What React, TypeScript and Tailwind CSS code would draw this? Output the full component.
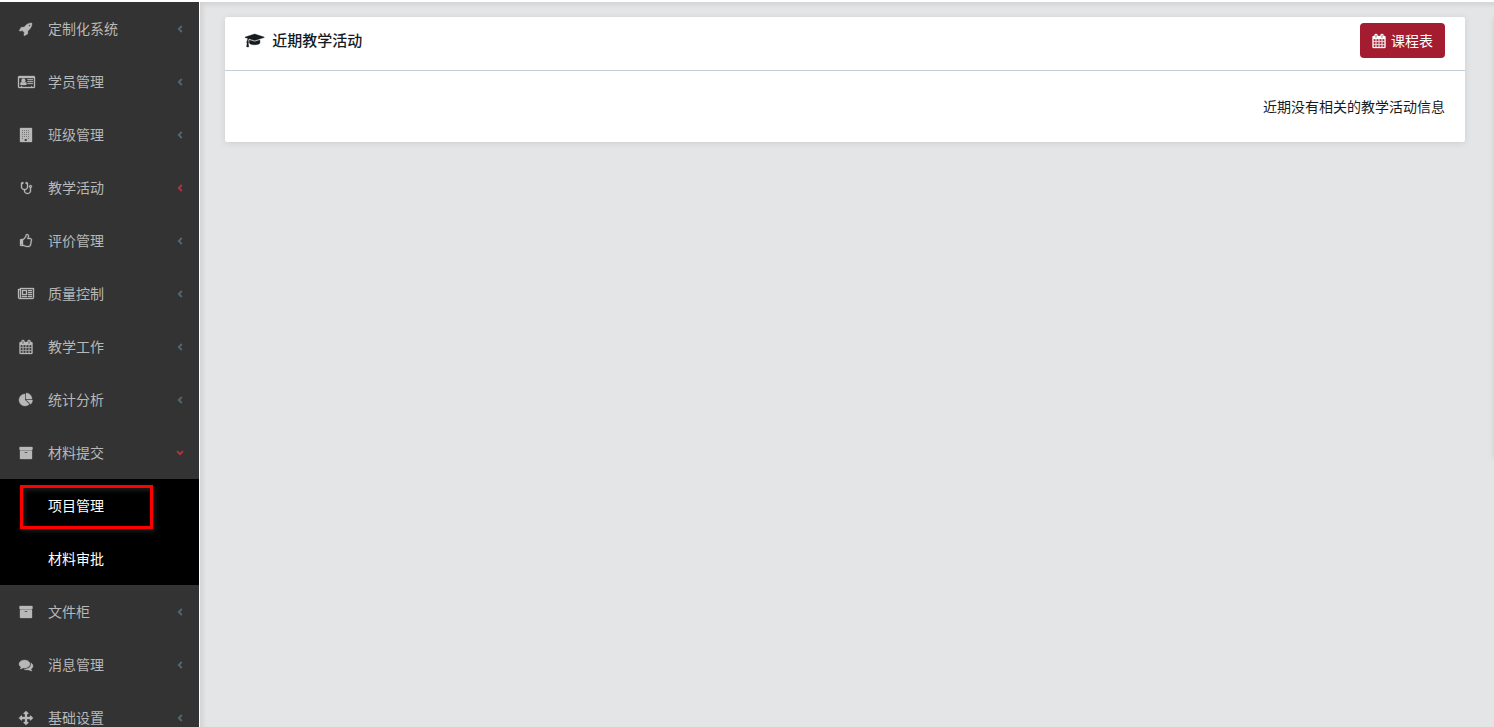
import { useState } from "react";

interface Glyph {
  width: number;
  d: string;
}

interface MenuItem {
  label: string;
  icon: Glyph;
  highlighted?: boolean;
  children?: string[];
}

// Glyphs share a 1792 unit em, only the width differs
const glyphs = {
  rocket: {
    width: 1792,
    d: "M1440 448q0-40-28-68t-68-28-68 28-28 68 28 68 68 28 68-28 28-68zm224-288q0 249-75.5 430.5t-253.5 360.5q-81 80-195 176l-20 379q-2 16-16 26l-384 224q-7 4-16 4-12 0-23-9l-64-64q-13-14-8-32l85-276-281-281-276 85q-3 1-9 1-14 0-23-9l-64-64q-17-19-5-39l224-384q10-14 26-16l379-20q96-114 176-195 188-187 358-258t431-71q14 0 24 9.5t10 22.5z",
  },
  idCard: {
    width: 2176,
    d: "M160 128H2016q66 0 113 47t47 113V1504q0 66-47 113t-113 47H160q-66 0-113-47t-47-113V288q0-66 47-113t113-47zM128 384V1504q0 32 32 32H384v-96H512v96H1664v-96H1792v96H2016q32 0 32-32V384zM352 1280q-64 0-64-120 0-270 180-270 90 70 222 70t222-70q180 0 180 270 0 120-64 120zM690 440a250 250 0 1 1 0 500a250 250 0 1 1 0-500zM1216 540H1900V640H1216zM1216 796H1900V896H1216zM1216 1052H1900V1152H1216z",
  },
  building: {
    width: 1536,
    d: "M64 0H1472q64 0 64 64V1728q0 64-64 64H64q-64 0-64-64V64q0-64 64-64zM256 256V384H384V256zM512 256V384H640V256zM768 256V384H896V256zM1024 256V384H1152V256zM256 512V640H384V512zM512 512V640H640V512zM768 512V640H896V512zM1024 512V640H1152V512zM256 768V896H384V768zM512 768V896H640V768zM768 768V896H896V768zM1024 768V896H1152V768zM256 1024V1152H384V1024zM512 1024V1152H640V1024zM768 1024V1152H896V1024zM1024 1024V1152H1152V1024zM256 1280V1408H384V1280zM1024 1280V1408H1152V1280zM576 1408V1664H896V1408z",
  },
  stethoscope: {
    width: 1408,
    d: "M1280 704q0-26-19-45t-45-19-45 19-19 45 19 45 45 19 45-19 19-45zm128 0q0 62-35.5 111t-92.5 70v395q0 159-131.5 271.5t-316.5 112.5-316.5-112.5-131.5-271.5v-132q-164-20-274-128t-110-252v-512q0-26 19-45t45-19q6 0 16 2 17-30 47-48t65-18q53 0 90.5 37.5t37.5 90.5-37.5 90.5-90.5 37.5q-33 0-64-18v402q0 106 94 181t226 75 226-75 94-181v-402q-31 18-64 18-53 0-90.5-37.5t-37.5-90.5 37.5-90.5 90.5-37.5q35 0 65 18t47 48q10-2 16-2 26 0 45 19t19 45v512q0 144-110 252t-274 128v132q0 106 94 181t226 75 226-75 94-181v-395q-57-21-92.5-70t-35.5-111q0-80 56-136t136-56 136 56 56 136z",
  },
  thumbsUp: {
    width: 1536,
    d: "M256 1344q0-26-19-45t-45-19-45 19-19 45 19 45 45 19 45-19 19-45zm1152-576q0-51-39-89.5t-89-38.5h-352q0-58 48-159.5t48-160.5q0-98-32-145t-128-47q-26 26-38 85t-30.5 125.5-59.5 109.5q-22 23-77 91-4 5-23 30t-31.5 41-34.5 42.5-40 44-38.5 35.5-40 27-35.5 9h-32v640h32q13 0 31.5 3t33 6.5 38 11 35 11.5 35.5 12.5 29 10.5q211 73 342 73h121q192 0 192-167 0-26-5-56 30-16 47.5-52.5t17.5-73.5-18-69q53-50 53-119 0-25-10-55.5t-25-47.5q32-1 53.5-47t21.5-81zm128-1q0 89-49 163 9 33 9 69 0 77-38 144 3 21 3 43 0 101-60 178 1 139-85 219.5t-227 80.5h-129q-96 0-189.5-22.5t-216.5-65.5q-116-40-138-40h-288q-53 0-90.5-37.5t-37.5-90.5v-640q0-53 37.5-90.5t90.5-37.5h274q36-24 137-155 58-75 107-128 24-25 35.5-85.5t30.5-126.5 62-108q39-37 90-37 84 0 151 32.5t102 101.5 35 186q0 93-48 192h176q104 0 180 76t76 179z",
  },
  newspaper: {
    width: 2048,
    d: "M1024 512h-384v384h384v-384zm128 640v128h-640v-128h640zm0-768v640h-640v-640h640zm640 768v128h-512v-128h512zm0-256v128h-512v-128h512zm0-256v128h-512v-128h512zm0-256v128h-512v-128h512zm-1536 960v-960h-128v960q0 26 19 45t45 19 45-19 19-45zm1664 0v-1088h-1536v1088q0 33-11 64h1483q26 0 45-19t19-45zm128-1216v1216q0 80-56 136t-136 56h-1664q-80 0-136-56t-56-136v-1088h256v-128h1792z",
  },
  calendar: {
    width: 1792,
    d: "M192 1664h288v-288h-288v288zm352 0h320v-288h-320v288zm-352-352h288v-320h-288v320zm352 0h320v-320h-320v320zm-352-384h288v-288h-288v288zm736 736h320v-288h-320v288zm-384-736h320v-288h-320v288zm768 736h288v-288h-288v288zm-384-352h320v-320h-320v320zm-352-864v-288q0-13-9.5-22.5t-22.5-9.5h-64q-13 0-22.5 9.5t-9.5 22.5v288q0 13 9.5 22.5t22.5 9.5h64q13 0 22.5-9.5t9.5-22.5zm736 864h288v-320h-288v320zm-384-384h320v-288h-320v288zm384 0h288v-288h-288v288zm32-480v-288q0-13-9.5-22.5t-22.5-9.5h-64q-13 0-22.5 9.5t-9.5 22.5v288q0 13 9.5 22.5t22.5 9.5h64q13 0 22.5-9.5t9.5-22.5zm384-64v1280q0 52-38 90t-90 38h-1408q-52 0-90-38t-38-90v-1280q0-52 38-90t90-38h128v-96q0-66 47-113t113-47h64q66 0 113 47t47 113v96h384v-96q0-66 47-113t113-47h64q66 0 113 47t47 113v96h128q52 0 90 38t38 90z",
  },
  pieChart: {
    width: 1792,
    d: "M768 890l546 546q-106 108-247.5 168t-298.5 60q-209 0-385.5-103t-279.5-279.5-103-385.5 103-385.5 279.5-279.5 385.5-103v762zm187 6h773q0 157-60 298.5t-168 247.5zm709-128h-768v-768q209 0 385.5 103t279.5 279.5 103 385.5z",
  },
  archive: {
    width: 1792,
    d: "M1088 832q0-26-19-45t-45-19h-256q-26 0-45 19t-19 45 19 45 45 19h256q26 0 45-19t19-45zm576-192v960q0 26-19 45t-45 19h-1408q-26 0-45-19t-19-45v-960q0-26 19-45t45-19h1408q26 0 45 19t19 45zm64-448v256q0 26-19 45t-45 19h-1536q-26 0-45-19t-19-45v-256q0-26 19-45t45-19h1536q26 0 45 19t19 45z",
  },
  comments: {
    width: 1792,
    d: "M1408 768q0 139-94 257t-256.5 186.5-353.5 68.5q-86 0-176-16-124 88-278 128-36 9-86 16h-3q-11 0-20.5-8t-11.5-21q-1-3-1-6.5t.5-6.5 2-6l2.5-5 3.5-5.5 4-5 4.5-5 4-4.5q5-6 23-25t26-29.5 22.5-29 25-38.5 20.5-44q-124-72-195-177t-71-224q0-139 94-257t256.5-186.5 353.5-68.5 353.5 68.5 256.5 186.5 94 257zm384 256q0 120-71 224.5t-195 176.5q10 24 20.5 44t25 38.5 22.5 29 26 29.5 23 25q1 1 4 4.5t4.5 5 4 5 3.5 5.5l2.5 5 2 6 .5 6.5-1 6.5q-3 14-13 22t-22 7q-50-7-86-16-154-40-278-128-90 16-176 16-271 0-472-132 58 4 88 4 161 0 309-45t264-129q125-92 192-212t67-254q0-77-23-152 129 71 204 178t75 230z",
  },
  arrows: {
    width: 1792,
    d: "M1792 896q0 26-19 45l-256 256q-19 19-45 19t-45-19-19-45v-128h-384v384h128q26 0 45 19t19 45-19 45l-256 256q-19 19-45 19t-45-19l-256-256q-19-19-19-45t19-45 45-19h128v-384h-384v128q0 26-19 45t-45 19-45-19l-256-256q-19-19-19-45t19-45l256-256q19-19 45-19t45 19 19 45v128h384v-384h-128q-26 0-45-19t-19-45 19-45l256-256q19-19 45-19t45 19l256 256q19 19 19 45t-19 45-45 19h-128v384h384v-128q0-26 19-45t45-19 45 19l256 256q19 19 19 45z",
  },
  graduationCap: {
    width: 2304,
    d: "M1774 836l18 316q4 69-82 128t-235 93.5-323 34.5-323-34.5-235-93.5-82-128l18-316 574 181q22 7 48 7t48-7zm530-324q0 23-22 31l-1120 352q-4 1-10 1t-10-1l-652-206q-43 34-71 111.5t-34 178.5q63 36 63 109 0 69-58 107l58 433q2 14-8 25-9 11-24 11h-192q-15 0-24-11-10-11-8-25l58-433q-58-38-58-107 0-73 65-111 11-207 98-330l-333-104q-22-8-22-31t22-31l1120-352q4-1 10-1t10 1l1120 352q22 8 22 31z",
  },
};

const menu: MenuItem[] = [
  { label: "定制化系统", icon: glyphs.rocket },
  { label: "学员管理", icon: glyphs.idCard },
  { label: "班级管理", icon: glyphs.building },
  { label: "教学活动", icon: glyphs.stethoscope, highlighted: true },
  { label: "评价管理", icon: glyphs.thumbsUp },
  { label: "质量控制", icon: glyphs.newspaper },
  { label: "教学工作", icon: glyphs.calendar },
  { label: "统计分析", icon: glyphs.pieChart },
  {
    label: "材料提交",
    icon: glyphs.archive,
    highlighted: true,
    children: ["项目管理", "材料审批"],
  },
  { label: "文件柜", icon: glyphs.archive },
  { label: "消息管理", icon: glyphs.comments },
  { label: "基础设置", icon: glyphs.arrows },
];

function Icon({ glyph, className }: { glyph: Glyph; className: string }) {
  return (
    <svg
      viewBox={`0 0 ${glyph.width} 1792`}
      className={`w-auto shrink-0 overflow-visible ${className}`}
      fill="currentColor"
      stroke="currentColor"
      strokeWidth="44"
      fillRule={glyph === glyphs.idCard || glyph === glyphs.building ? "evenodd" : "nonzero"}
      aria-hidden="true"
    >
      <path d={glyph.d} />
    </svg>
  );
}

function Chevron({ open, highlighted }: { open: boolean; highlighted?: boolean }) {
  return (
    <svg
      viewBox="0 0 8 8"
      className={`mr-[15px] ml-auto size-2 ${highlighted ? "text-[#b8323f]" : "text-[#526872]"} ${
        open ? "-rotate-90" : ""
      }`}
      fill="none"
      stroke="currentColor"
      strokeWidth="1.8"
      aria-hidden="true"
    >
      <path d="M5.8 1L2.8 4L5.8 7" />
    </svg>
  );
}

export default function App() {
  const [openMenu, setOpenMenu] = useState("材料提交");

  return (
    <div className="flex h-screen flex-col overflow-hidden bg-white pt-0.5 font-['Noto_Sans_CJK_SC',sans-serif] text-sm text-[#151b1e]">
      <div className="flex min-h-0 flex-1">
        {/* Sidebar */}
        <nav className="w-[200px] shrink-0 overflow-hidden border-r border-white bg-[#333333] text-[#b8b8b8]">
          <ul>
            {menu.map((item) => {
              const open = item.label === openMenu;
              return (
                <li key={item.label}>
                  <button
                    type="button"
                    aria-expanded={open}
                    onClick={() => setOpenMenu(open ? "" : item.label)}
                    className="flex h-[53px] w-full items-center text-left"
                  >
                    <span className="ml-4 flex w-5 justify-center">
                      <Icon glyph={item.icon} className="h-3.5" />
                    </span>
                    <span className="ml-3 pb-0.5">{item.label}</span>
                    <Chevron open={open} highlighted={item.highlighted} />
                  </button>
                  {open && item.children && (
                    <ul className="bg-black text-white">
                      {item.children.map((child, index) => (
                        <li key={child} className="relative">
                          <a href="#" className="flex h-[53px] items-center pb-0.5 pl-12">
                            {child}
                          </a>
                          {index === 0 && (
                            <span className="pointer-events-none absolute inset-y-1.5 left-5 h-11 w-[133px] border-3 border-[#ff0000] shadow-[2px_2px_5px_#222222,inset_2px_2px_5px_#222222]" />
                          )}
                        </li>
                      ))}
                    </ul>
                  )}
                </li>
              );
            })}
          </ul>
        </nav>

        {/* Content */}
        <main className="relative min-w-0 flex-1 overflow-hidden bg-[#e4e5e6] pt-[15px] pr-[29px] pl-[25px] shadow-[inset_3px_3px_4px_#d2d3d4]">
          <section className="rounded-xs bg-white shadow-[0_1px_6px_#cccdce]">
            <header className="flex h-[54px] items-start justify-between border-b border-[#c2cfd6] px-5 pt-1.5">
              <h1 className="flex h-9 items-center gap-2 pb-0.5 text-[15px] font-medium">
                <Icon glyph={glyphs.graduationCap} className="h-[15px]" />
                近期教学活动
              </h1>
              <button
                type="button"
                className="flex h-[35px] items-center gap-[5px] rounded bg-[#a41c30] px-3 text-white"
              >
                <Icon glyph={glyphs.calendar} className="h-3.5" />
                <span className="pb-0.5">课程表</span>
              </button>
            </header>
            <p className="px-5 py-[25px] text-right leading-[21px]">近期没有相关的教学活动信息</p>
          </section>
          <aside className="absolute top-[15px] left-full h-[440px] w-60 bg-white shadow-[0_1px_6px_#cccdce]" />
        </main>
      </div>
    </div>
  );
}
